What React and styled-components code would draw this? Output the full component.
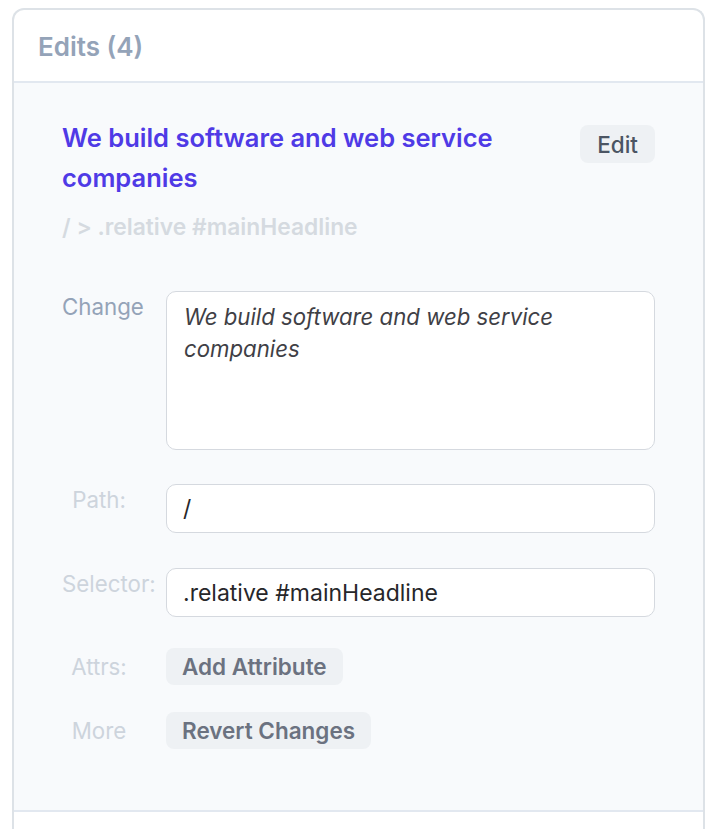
import React from 'react';
import styled, { createGlobalStyle } from 'styled-components';

const GlobalStyle = createGlobalStyle`
  html, body {
    margin: 0;
    padding: 0;
    background: #FFF;
  }
  body {
    font-family: Inter, "Noto Sans", "Liberation Sans", sans-serif;
    -webkit-font-smoothing: antialiased;
  }
`;

const Page = styled.div`
  padding: 8px 13px 0 12px;
`;

const Card = styled.section`
  border: 2px solid #dde2e7;
  border-bottom: none;
  border-radius: 12px 12px 0 0;
  overflow: hidden;
  background: #FFF;
`;

const Header = styled.header`
  height: 73px;
  display: flex;
  align-items: center;
  padding: 2px 24px 0;
  box-sizing: border-box;
  border-bottom: 2px solid #e2e8f0;
  font-size: 26px;
  font-weight: 600;
  color: #94a3b8;
`;

const Body = styled.div`
  background: #f8fafc;
  padding: 35px 48px 61px 48px;
  border-bottom: 2px solid #e2e8f0;
`;

const Footer = styled.div`
  height: 20px;
  background: #FFF;
`;

const TitleRow = styled.div`
  display: flex;
  justify-content: space-between;
  align-items: flex-start;
`;

const Title = styled.h2`
  flex: 1;
  margin: 0 50px 0 0;
  font-size: 25.5px;
  line-height: 40px;
  font-weight: 600;
  color: #4f3ae6;
`;

const GrayButton = styled.button`
  flex: none;
  height: ${p => p.h || 37}px;
  padding: 0 ${p => p.px || 16}px;
  margin-top: ${p => p.mt || 0}px;
  border: none;
  border-radius: 8px;
  background: #eef1f4;
  color: ${p => p.dark ? '#4b5563' : '#6b7280'};
  font-family: inherit;
  font-size: 22.5px;
  font-weight: ${p => p.dark ? 500 : 600};
  cursor: pointer;
`;

const Crumb = styled.div`
  margin-top: 15px;
  font-size: 22.8px;
  line-height: 28px;
  font-weight: 600;
  color: #d5dae0;
`;

const Form = styled.div`
  margin-top: 50px;
  display: flex;
  flex-direction: column;
`;

const Row = styled.div`
  display: flex;
  align-items: flex-start;
  margin-top: ${p => p.mt || 0}px;
`;

const Label = styled.label`
  flex: none;
  width: 74px;
  margin-right: 30px;
  text-align: center;
  white-space: nowrap;
  font-size: 22.3px;
  line-height: ${p => p.lh || 32}px;
  color: ${p => p.strong ? '#94a3b8' : '#cdd4dc'};
`;

const TextArea = styled.textarea`
  flex: 1;
  box-sizing: border-box;
  height: 159px;
  padding: 9px 17px;
  border: 1.5px solid #d5d9df;
  border-radius: 10px;
  background: #FFF;
  resize: none;
  outline: none;
  font-family: inherit;
  font-size: 22.2px;
  font-style: italic;
  line-height: 32px;
  color: #3f3f46;
`;

const TextInput = styled.input`
  flex: 1;
  box-sizing: border-box;
  height: 49px;
  padding: 0 16px;
  border: 1.5px solid #d5d9df;
  border-radius: 10px;
  background: #FFF;
  outline: none;
  font-family: inherit;
  font-size: 23px;
  color: #27272a;
`;

export default function App() {
  return (
    <Page>
      <GlobalStyle />
      <Card>
        <Header>Edits (4)</Header>
        <Body>
          <TitleRow>
            <Title>We build software and web service companies</Title>
            <GrayButton dark px={17} h={38} mt={7}>Edit</GrayButton>
          </TitleRow>
          <Crumb>/ &gt; .relative #mainHeadline</Crumb>
          <Form>
            <Row>
              <Label strong>Change</Label>
              <TextArea readOnly value="We build software and web service companies" />
            </Row>
            <Row mt={34}>
              <Label>Path:</Label>
              <TextInput readOnly value="/" />
            </Row>
            <Row mt={35}>
              <Label>Selector:</Label>
              <TextInput readOnly value=".relative #mainHeadline" />
            </Row>
            <Row mt={31}>
              <Label lh={37}>Attrs:</Label>
              <GrayButton>Add Attribute</GrayButton>
            </Row>
            <Row mt={27}>
              <Label lh={37}>More</Label>
              <GrayButton>Revert Changes</GrayButton>
            </Row>
          </Form>
        </Body>
        <Footer />
      </Card>
    </Page>
  );
}
